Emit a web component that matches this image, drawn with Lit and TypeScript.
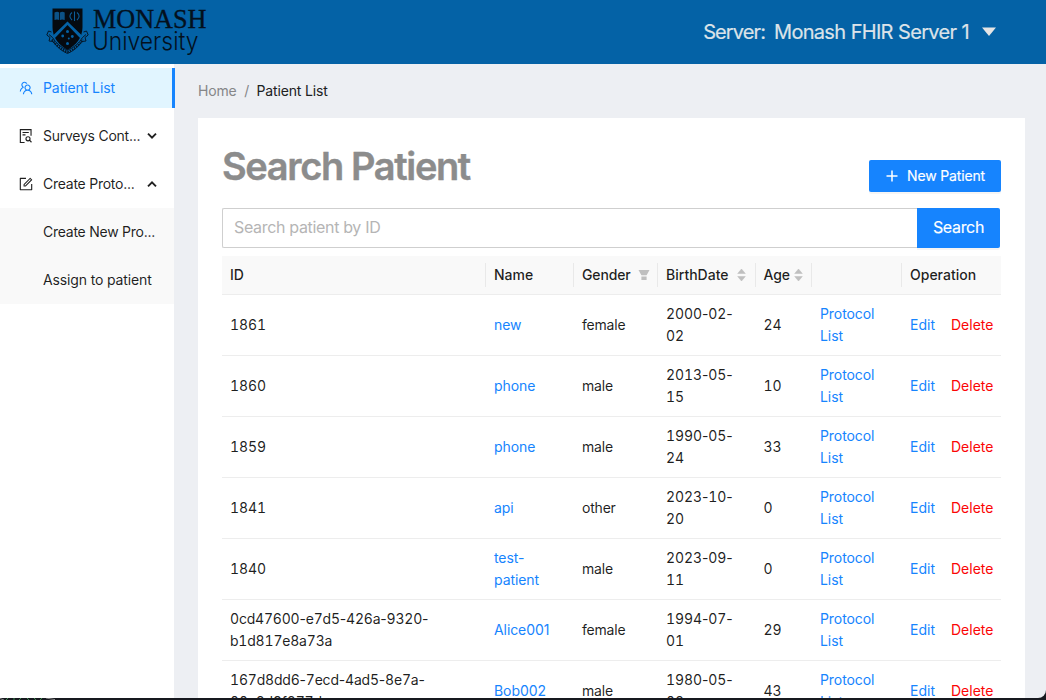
import { LitElement, html, css, svg } from "lit";
import { customElement } from "lit/decorators.js";

interface Patient {
  id: string;
  name: string;
  gender: string;
  birth: string;
  age: number;
}

const patients: Patient[] = [
  { id: "1861", name: "new", gender: "female", birth: "2000-02-02", age: 24 },
  { id: "1860", name: "phone", gender: "male", birth: "2013-05-15", age: 10 },
  { id: "1859", name: "phone", gender: "male", birth: "1990-05-24", age: 33 },
  { id: "1841", name: "api", gender: "other", birth: "2023-10-20", age: 0 },
  { id: "1840", name: "test-patient", gender: "male", birth: "2023-09-11", age: 0 },
  { id: "0cd47600-e7d5-426a-9320-b1d817e8a73a", name: "Alice001", gender: "female", birth: "1994-07-01", age: 29 },
  { id: "167d8dd6-7ecd-4ad5-8e7a-00e8d9f877da", name: "Bob002", gender: "male", birth: "1980-05-08", age: 43 },
];

const teamIcon = svg`<path d="M824.2 699.9a301.55 301.55 0 00-86.4-60.4C783.1 602.8 812 546.8 812 484c0-110.8-92.4-201.7-203.2-200-109.1 1.7-197 90.6-197 200 0 62.8 29 118.8 74.2 155.5a300.95 300.95 0 00-86.4 60.4C345 754.6 314 826.8 312 903.8a8 8 0 008 8.2h56c4.3 0 7.9-3.4 8-7.7 1.9-58 25.4-112.3 66.7-153.5A226.62 226.62 0 01612 684c60.9 0 118.2 23.7 161.3 66.8C814.6 792 838 846.3 840 904.3c.1 4.3 3.7 7.7 8 7.7h56a8 8 0 008-8.2c-2-77-33-149.2-87.8-203.9zM612 612c-34.2 0-66.4-13.3-90.5-37.5a126.86 126.86 0 01-37.5-91.8c.3-32.8 13.4-64.5 36.3-88 24-24.6 56.1-38.3 90.4-38.7 33.9-.3 66.8 12.9 91 36.6 24.8 24.3 38.4 56.8 38.4 91.4 0 34.2-13.3 66.3-37.5 90.5A127.3 127.3 0 01612 612zM361.5 510.4c-.9-8.7-1.4-17.5-1.4-26.4 0-15.9 1.5-31.4 4.3-46.5.7-3.6-1.2-7.3-4.5-8.8-13.6-6.1-26.1-14.5-36.9-25.1a127.54 127.54 0 01-38.7-95.4c.9-32.1 13.8-62.6 36.3-85.6 24.7-25.3 57.9-39.1 93.2-38.7 31.9.3 62.7 12.6 86 34.4 7.9 7.4 14.7 15.6 20.4 24.4 2 3.1 5.9 4.4 9.3 3.2 17.6-6.1 36.2-10.4 55.3-12.4 5.6-.6 8.8-6.6 6.3-11.6-32.5-64.3-98.9-108.7-175.7-109.9-110.9-1.7-203.3 89.2-203.3 199.9 0 62.8 28.9 118.8 74.2 155.5-31.8 14.7-61.1 35-86.5 60.4-54.8 54.7-85.8 126.9-87.8 204a8 8 0 008 8.2h56.1c4.3 0 7.9-3.4 8-7.7 1.9-58 25.4-112.3 66.7-153.5 29.4-29.4 65.4-49.8 104.7-59.7 3.9-1 6.5-4.7 6-8.7z"/>`;
const surveyIcon = svg`<g fill="none" stroke="currentColor" stroke-width="72"><path d="M420 924H150V100h684v390M290 290h400M290 440h190"/><circle cx="640" cy="690" r="130"/><path d="M732 782l130 130"/></g>`;
const formIcon = svg`<path d="M904 512h-56c-4.4 0-8 3.6-8 8v320H184V184h320c4.4 0 8-3.6 8-8v-56c0-4.4-3.6-8-8-8H144c-17.7 0-32 14.3-32 32v736c0 17.7 14.3 32 32 32h736c17.7 0 32-14.3 32-32V520c0-4.4-3.6-8-8-8z"/><path d="M355.9 534.9L354 653.8c-.1 8.9 7.1 16.2 16 16.2h.4l118-2.9c2-.1 4-.9 5.4-2.3l415.9-415c3.1-3.1 3.1-8.2 0-11.3L785.4 114.3c-1.6-1.6-3.6-2.3-5.7-2.3s-4.1.8-5.7 2.3l-415.8 415a8.3 8.3 0 00-2.3 5.6zm63.5 23.6L779.7 199l45.2 45.1-360.5 359.7-45.7 1.1.7-46.4z"/>`;

const icon = (body: unknown) => html`<svg class="icon" viewBox="64 64 896 896" fill="currentColor">${body}</svg>`;
const chevron = (d: string) => html`<svg class="chevron" viewBox="0 0 10 8" fill="none" stroke="currentColor" stroke-width="1.9"><path d=${d} /></svg>`;
const sorter = (cls: string) => html`<svg class="sorter ${cls}" viewBox="0 0 9 12"><path d="M4.5 0L8.3 4.5H.7zM4.5 12L8.3 7.5H.7z" fill="#bfbfbf" stroke="#bfbfbf" stroke-width=".5" stroke-linejoin="round" /></svg>`;

// Digits keep a fixed width while the hyphens stay narrow.
const hyphenated = (value: string) =>
  value.split("-").map((part, i) => (i === 0 ? html`${part}` : html`<span class="hyphen">-</span>${part}`));

@customElement("app-root")
export class AppRoot extends LitElement {
  static styles = css`
    :host {
      display: flex;
      flex-direction: column;
      height: 700px;
      overflow: hidden;
      background: #17191f;
      font: 14px/22px Inter, sans-serif;
      letter-spacing: -0.08px;
      color: rgba(0, 0, 0, 0.88);
    }
    * { box-sizing: border-box; }
    svg { display: block; flex: none; }
    .page {
      height: 698px;
      overflow: hidden;
      display: flex;
      flex-direction: column;
      background: #edeff3;
      border-bottom-right-radius: 8px;
    }
    .edge { display: block; width: 60px; height: 2px; }
    header {
      flex: none;
      height: 64px;
      background: #0462a6;
      display: flex;
      justify-content: space-between;
      padding: 0 50px 0 44px;
    }
    .logo { width: 170px; height: 64px; letter-spacing: 0; }
    .serif { font-family: "Liberation Serif", serif; font-size: 27.5px; }
    .light { font-family: Inter, sans-serif; font-weight: 300; font-size: 25px; }
    .server {
      display: flex;
      align-items: center;
      color: #dce3e9;
      font-size: 20px;
      line-height: 64px;
      letter-spacing: -0.7px;
      word-spacing: 0.4px;
      -webkit-text-stroke: 0.2px #dce3e9;
      white-space: pre;
    }
    .server .label { margin-right: 9px; letter-spacing: -0.9px; }
    .server svg { width: 14px; height: 10px; margin-left: 13px; }
    .body { flex: 1; display: flex; min-height: 0; }
    nav { flex: none; width: 174px; background: #fff; padding-top: 4px; }
    .item {
      display: flex;
      align-items: center;
      height: 40px;
      margin-bottom: 8px;
      padding: 0 17px 0 19px;
      white-space: nowrap;
    }
    .item .text { flex: none; margin-left: 10px; width: 99px; }
    .item.active {
      width: 175px;
      position: relative;
      background: #e1f5ff;
      color: #1684fe;
      border-right: 3px solid #1684fe;
    }
    .item.open { margin-bottom: 4px; }
    .dots { letter-spacing: -0.25px; }
    .icon { width: 14px; height: 14px; }
    .chevron { width: 10px; height: 8px; margin-left: 5px; }
    .sub { background: #f9f9f9; padding: 4px 0; height: 96px; }
    .sub .item { padding-left: 43px; }
    .assign { letter-spacing: -0.14px; }
    main { flex: 1; min-width: 0; padding: 16px 21px 0 24px; }
    .crumbs { display: flex; color: #858688; height: 22px; letter-spacing: -0.15px; }
    .crumbs .sep { margin: 0 7.5px; }
    .crumbs .here { color: #202122; }
    .card {
      background: #fff;
      margin-top: 16px;
      padding: 24px 24px 0;
      height: 640px;
    }
    .top { display: flex; justify-content: space-between; height: 66px; }
    h1 {
      margin: 0;
      font-size: 38px;
      line-height: 48px;
      font-weight: 600;
      color: #8c8c8c;
      letter-spacing: -1.37px;
      -webkit-text-stroke: 0.4px #8c8c8c;
    }
    .new {
      display: flex;
      align-items: center;
      width: 132px;
      height: 32px;
      margin-top: 18px;
      padding-left: 17px;
      background: #1684fe;
      color: #fff;
      border-radius: 2px;
      box-shadow: 0 2px 0 rgba(0, 0, 0, 0.04);
      letter-spacing: -0.15px;
      -webkit-text-stroke: 0.15px #fff;
      white-space: nowrap;
    }
    .new svg { width: 12px; height: 12px; margin-right: 9px; }
    .search { display: flex; height: 40px; width: 778px; font-size: 16px; line-height: 37px; }
    .field {
      flex: 1;
      border: 1px solid #cfcfcf;
      border-right: 0;
      border-radius: 2px 0 0 2px;
      padding-left: 11px;
      color: #b5b5b5;
    }
    .go {
      width: 83px;
      text-align: center;
      background: #1684fe;
      color: #fff;
      line-height: 39px;
      border-radius: 0 2px 2px 0;
      box-shadow: 0 2px 0 rgba(0, 0, 0, 0.04);
      -webkit-text-stroke: 0.15px #fff;
    }
    .field, .go { letter-spacing: -0.33px; }
    .table { margin-top: 8px; width: 779px; }
    .row {
      display: grid;
      grid-template-columns: 264px 88px 84px 97.5px 56.5px 90px 99px;
      align-items: center;
      height: 61px;
      border-bottom: 1px solid #ededed;
    }
    .head { height: 39px; background: #f9f9f9; font-weight: 500; letter-spacing: 0; }
    .cell { padding: 0 8px; }
    .head .cell { display: flex; align-items: center; height: 24px; border-right: 1px solid #e9e9e9; white-space: nowrap; }
    .head .cell:last-child { border-right: 0; }
    .gender { letter-spacing: -0.15px; }
    .sorter { width: 9px; height: 12px; margin-left: 8.5px; }
    .sorter.tight { margin-left: 4px; }
    .filter { width: 12px; height: 10px; margin-left: 7.5px; }
    .row:not(.head) .sex { letter-spacing: -0.2px; }
    .wrap { width: 216px; }
    .num { font-variant-numeric: tabular-nums; letter-spacing: -0.2px; }
    .short { letter-spacing: -0.1px; }
    .date { width: 86px; font-variant-numeric: tabular-nums; letter-spacing: -0.1px; }
    .hyphen { font-variant-numeric: normal; }
    .link { color: #1684fe; }
    .ops { display: flex; gap: 16px; letter-spacing: 0; }
    .danger { color: #fb0505; }
  `;

  render() {
    return html`
      <div class="page">
        <header>
          ${this.logo()}
          <div class="server">
            <span class="label">Server:</span><span>Monash FHIR Server 1</span>
            <svg viewBox="0 0 14 10"><path d="M0 .5H14L7 9z" fill="#e5e5e5" /></svg>
          </div>
        </header>
        <div class="body">
          <nav>
            <div class="item active">${icon(teamIcon)}<span class="text">Patient List</span></div>
            <div class="item">${icon(surveyIcon)}<span class="text dots">Surveys Cont...</span>${chevron("M1 1.6L5 5.6L9 1.6")}</div>
            <div class="item open">${icon(formIcon)}<span class="text dots">Create Proto...</span>${chevron("M1 6.4L5 2.4L9 6.4")}</div>
            <div class="sub">
              <div class="item dots">Create New Pro...</div>
              <div class="item assign">Assign to patient</div>
            </div>
          </nav>
          <main>
            <div class="crumbs"><span>Home</span><span class="sep">/</span><span class="here">Patient List</span></div>
            <section class="card">
              <div class="top">
                <h1>Search Patient</h1>
                <div class="new">
                  <svg viewBox="0 0 12 12"><path d="M6 .5V11.5M.5 6H11.5" stroke="#fff" stroke-width="1.5" /></svg>
                  New Patient
                </div>
              </div>
              <div class="search"><div class="field">Search patient by ID</div><div class="go">Search</div></div>
              <div class="table">
                <div class="row head">
                  <div class="cell">ID</div>
                  <div class="cell">Name</div>
                  <div class="cell gender">Gender<svg class="filter" viewBox="0 0 12 10"><path d="M.5 0h11L8.6 5.3H3.4zM3.4 6.5h5.2V10H3.4z" fill="#bfbfbf" /></svg></div>
                  <div class="cell">BirthDate${sorter("")}</div>
                  <div class="cell gender">Age${sorter("tight")}</div>
                  <div class="cell"></div>
                  <div class="cell">Operation</div>
                </div>
                ${patients.map(
                  (p) => html`<div class="row">
                    <div class="cell"><div class="wrap num ${p.id.length < 6 ? "short" : ""}">${hyphenated(p.id)}</div></div>
                    <div class="cell link">${p.name}</div>
                    <div class="cell sex">${p.gender}</div>
                    <div class="cell date">${hyphenated(p.birth)}</div>
                    <div class="cell num">${p.age}</div>
                    <div class="cell link">Protocol List</div>
                    <div class="cell ops"><span class="link">Edit</span><span class="danger">Delete</span></div>
                  </div>`
                )}
              </div>
            </section>
          </main>
        </div>
      </div>
      <svg class="edge" viewBox="0 0 60 2">
        <path d="M0 .5L4 2M46 0L55 1.6" stroke="#8b8b8b" />
        <path d="M8 0L6 2M14 0V2M21 0L19 2M27 0L29 2M34 0L36 2M42 0L40 2" stroke="#3f8a51" />
      </svg>
    `;
  }

  private logo() {
    return html`<svg class="logo" viewBox="44 0 170 64">
      <path d="M52.5 8.5H82.5V27C82.5 38 76 45 67.5 50C59 45 52.5 38 52.5 27Z" fill="#050a10" />
      <path d="M67.5 21.5L53 35.5L54.5 38.5L67.5 25L80.5 38.5L82 35.5Z" fill="#0462a6" />
      <g fill="#0c5287">
        <path d="M54.5 12.5Q57.5 11 59.2 12.6V20Q57 18.8 54.5 20ZM60 12.6Q62 11 64.7 12.5V20Q62 18.8 60 20Z" />
      </g>
      <path d="M74.5 11.5V21M72 12.5Q67.8 16 72 20M77 12.5Q81.2 16 77 20" fill="none" stroke="#0d5d98" stroke-width="1.1" />
      <g fill="#0462a6">
        <circle cx="67.5" cy="31.5" r="1.5" /><circle cx="62.7" cy="36" r="1.4" /><circle cx="72.3" cy="36.5" r="1.4" />
        <circle cx="68.8" cy="38.5" r="1" /><circle cx="67.5" cy="43.6" r="1.5" />
      </g>
      <g fill="none" stroke="#04182a" stroke-width="1">
        <path d="M51.5 32L48.5 31L46.8 35L50 37.5L49 41L53 41.5Q59 50 67.5 53.5Q76 50 82 41.5L86 41L85 37.5L88.2 35L86.5 31L83.5 32" />
        <path d="M49 34.5L52.5 37.5Q57.5 46 67.5 50.2Q77.5 46 82.5 37.5L86 34.5" />
        <path d="M52 39.5Q57.5 47.8 67.5 52Q77.5 47.8 83 39.5" stroke-dasharray="1.5 1" stroke-width="2" />
      </g>
      <text class="serif" x="93" y="28" textLength="113.5" lengthAdjust="spacingAndGlyphs" fill="#03101d" stroke="#03101d" stroke-width=".35">MONASH</text>
      <text class="light" x="92" y="50.3" textLength="106.5" lengthAdjust="spacingAndGlyphs" fill="#03101d">University</text>
    </svg>`;
  }
}
